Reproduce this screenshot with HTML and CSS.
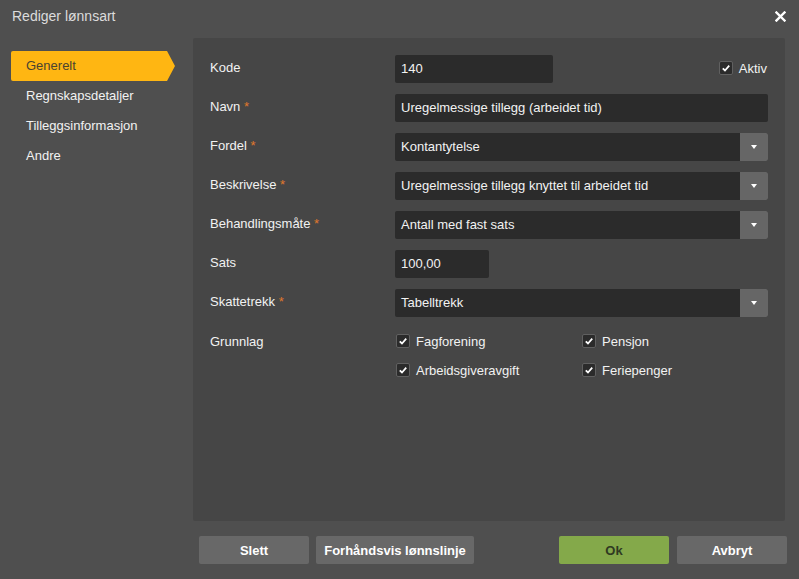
FILE: index.html
```html
<!DOCTYPE html>
<html lang="no">
<head>
<meta charset="utf-8">
<title>Rediger lønnsart</title>
<link rel="stylesheet" href="styles.css">
</head>
<body>
<div class="dialog">
  <header class="titlebar">
    <span class="title">Rediger lønnsart</span>
    <span class="close"><svg width="11" height="11" viewBox="0 0 11 11"><path d="M1.5 1.5 L9.5 9.5 M9.5 1.5 L1.5 9.5" stroke="#fff" stroke-width="2.4" stroke-linecap="square"/></svg></span>
  </header>
  <div class="main">
    <nav class="sidebar">
      <div class="nav-item active">Generelt</div>
      <div class="nav-item">Regnskapsdetaljer</div>
      <div class="nav-item">Tilleggsinformasjon</div>
      <div class="nav-item">Andre</div>
    </nav>
    <section class="panel">
      <div class="row">
        <label class="lbl">Kode</label>
        <div class="ctl split">
          <div class="input short">140</div>
          <div class="check"><span class="box"><svg viewBox="0 0 13 13"><path d="M3 6.8 L5.4 9.2 L10 4" fill="none" stroke="#fff" stroke-width="1.9"/></svg></span>Aktiv</div>
        </div>
      </div>
      <div class="row">
        <label class="lbl">Navn <span class="req">*</span></label>
        <div class="ctl"><div class="input">Uregelmessige tillegg (arbeidet tid)</div></div>
      </div>
      <div class="row">
        <label class="lbl">Fordel <span class="req">*</span></label>
        <div class="ctl"><div class="select"><span class="val">Kontantytelse</span><span class="caret"><i></i></span></div></div>
      </div>
      <div class="row">
        <label class="lbl">Beskrivelse <span class="req">*</span></label>
        <div class="ctl"><div class="select"><span class="val">Uregelmessige tillegg knyttet til arbeidet tid</span><span class="caret"><i></i></span></div></div>
      </div>
      <div class="row">
        <label class="lbl">Behandlingsmåte <span class="req">*</span></label>
        <div class="ctl"><div class="select"><span class="val">Antall med fast sats</span><span class="caret"><i></i></span></div></div>
      </div>
      <div class="row">
        <label class="lbl">Sats</label>
        <div class="ctl"><div class="input sats">100,00</div></div>
      </div>
      <div class="row">
        <label class="lbl">Skattetrekk <span class="req">*</span></label>
        <div class="ctl"><div class="select"><span class="val">Tabelltrekk</span><span class="caret"><i></i></span></div></div>
      </div>
      <div class="row grunnlag">
        <label class="lbl">Grunnlag</label>
        <div class="checks">
          <div class="check"><span class="box"><svg viewBox="0 0 13 13"><path d="M3 6.8 L5.4 9.2 L10 4" fill="none" stroke="#fff" stroke-width="1.9"/></svg></span>Fagforening</div>
          <div class="check"><span class="box"><svg viewBox="0 0 13 13"><path d="M3 6.8 L5.4 9.2 L10 4" fill="none" stroke="#fff" stroke-width="1.9"/></svg></span>Pensjon</div>
          <div class="check"><span class="box"><svg viewBox="0 0 13 13"><path d="M3 6.8 L5.4 9.2 L10 4" fill="none" stroke="#fff" stroke-width="1.9"/></svg></span>Arbeidsgiveravgift</div>
          <div class="check"><span class="box"><svg viewBox="0 0 13 13"><path d="M3 6.8 L5.4 9.2 L10 4" fill="none" stroke="#fff" stroke-width="1.9"/></svg></span>Feriepenger</div>
        </div>
      </div>
    </section>
  </div>
  <footer class="footer">
    <button class="btn">Slett</button>
    <button class="btn wide">Forhåndsvis lønnslinje</button>
    <span class="spacer"></span>
    <button class="btn ok">Ok</button>
    <button class="btn">Avbryt</button>
  </footer>
</div>
</body>
</html>
```
FILE: styles.css
```css
* { box-sizing: border-box; }
html, body {
  margin: 0;
  padding: 0;
  background: #4f4f4f;
  font-family: Arial, "Liberation Sans", sans-serif;
  font-size: 13px;
  color: #f2f2f2;
}
.dialog {
  width: 799px;
  height: 579px;
  display: flex;
  flex-direction: column;
}
.titlebar {
  height: 38px;
  display: flex;
  align-items: flex-start;
  justify-content: space-between;
  padding: 7px 13px 0 12px;
}
.title {
  font-size: 14px;
  color: #dcdcdc;
  line-height: 18px;
}
.close {
  display: flex;
  padding-top: 4px;
}
.main {
  display: flex;
  height: 483px;
  padding-right: 14px;
}
.sidebar {
  width: 193px;
  padding: 13px 0 0 11px;
  flex: none;
}
.nav-item {
  height: 30px;
  line-height: 30px;
  padding-left: 15px;
  color: #f2f2f2;
}
.nav-item.active {
  width: 164px;
  background: #ffb612;
  color: #4a4331;
  border-radius: 2px 0 0 2px;
  clip-path: polygon(0 0, 156px 0, 164px 50%, 156px 100%, 0 100%);
}
.panel {
  flex: 1;
  background: #464646;
  border-radius: 2px;
  padding: 17px 17px 0 17px;
  display: flex;
  flex-direction: column;
  gap: 11px;
}
.row {
  display: flex;
  align-items: center;
  min-height: 28px;
}
.lbl {
  width: 185px;
  flex: none;
  color: #f2f2f2;
  line-height: 16px;
  padding-bottom: 2px;
}
.req { color: #e0782c; }
.ctl { flex: 1; }
.split {
  display: flex;
  align-items: center;
  justify-content: space-between;
}
.input, .select {
  height: 28px;
  background: #2b2b2b;
  border-radius: 2px;
  display: flex;
  align-items: center;
  padding-left: 6px;
  padding-bottom: 1px;
  color: #f2f2f2;
}
.input.short { width: 158px; }
.input.sats { width: 94px; }
.select { padding-bottom: 0; overflow: hidden; }
.select .val { flex: 1; padding-bottom: 1px; }
.caret {
  width: 28px;
  height: 28px;
  background: #666;
  display: flex;
  align-items: center;
  justify-content: center;
}
.caret i {
  width: 0;
  height: 0;
  border-left: 3.5px solid transparent;
  border-right: 3.5px solid transparent;
  border-top: 4px solid #fff;
}
.check {
  display: flex;
  align-items: center;
  gap: 6px;
  color: #f2f2f2;
  height: 20px;
}
.split .check { padding-right: 1px; padding-bottom: 2px; }
.box {
  width: 14px;
  height: 14px;
  background: #2b2b2b;
  border: 1px solid #606060;
  border-radius: 2px;
  display: flex;
  align-items: center;
  justify-content: center;
}
.box svg { width: 12px; height: 12px; }
.grunnlag { align-items: flex-start; padding-top: 3px; }
.grunnlag .lbl { line-height: 18px; padding-bottom: 0; padding-top: 2px; }
.checks {
  display: grid;
  grid-template-columns: 186px 186px;
  row-gap: 9px;
  padding-left: 1px;
}
.footer {
  display: flex;
  align-items: center;
  height: 58px;
  padding: 0 12px 0 199px;
  gap: 7px;
}
.spacer { flex: 1; }
.btn {
  height: 28px;
  width: 110px;
  border: none;
  border-radius: 2px;
  background: #686868;
  color: #fff;
  font-family: Arial, "Liberation Sans", sans-serif;
  font-size: 13px;
  font-weight: bold;
  padding: 0;
}
.btn.wide { width: 158px; }
.btn.ok { background: #84a94a; color: #2f3a22; margin-right: 1px; }
```
